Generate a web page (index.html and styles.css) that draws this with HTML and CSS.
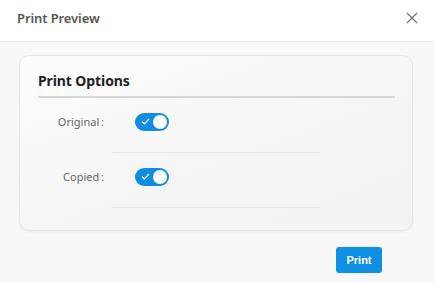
FILE: index.html
```html
<!DOCTYPE html>
<html>
<head>
<meta charset="utf-8">
<link rel="stylesheet" href="styles.css">
</head>
<body>
<div class="dialog">
  <header class="head">
    <h1 class="head-title">Print Preview</h1>
    <button class="close" aria-label="Close">
      <svg width="12" height="12" viewBox="0 0 12 12"><path d="M1 1L11 11M11 1L1 11" stroke="#707070" stroke-width="1.2" fill="none"/></svg>
    </button>
  </header>
  <main class="body">
    <section class="card">
      <h2 class="card-title">Print Options</h2>
      <div class="row">
        <label class="label">Original&thinsp;:</label>
        <div class="field">
          <span class="toggle"><svg class="check" width="9" height="7" viewBox="0 0 9 7"><path d="M1 3.6L3.3 5.8L8 1" stroke="#fff" stroke-width="1.2" fill="none"/></svg><span class="knob"></span></span>
        </div>
      </div>
      <div class="row">
        <label class="label">Copied&thinsp;:</label>
        <div class="field">
          <span class="toggle"><svg class="check" width="9" height="7" viewBox="0 0 9 7"><path d="M1 3.6L3.3 5.8L8 1" stroke="#fff" stroke-width="1.2" fill="none"/></svg><span class="knob"></span></span>
        </div>
      </div>
    </section>
    <div class="actions">
      <button class="print">Print</button>
    </div>
  </main>
</div>
</body>
</html>
```

FILE: styles.css
```css
html, body {
  margin: 0;
  padding: 0;
  background: #f8f8f8;
  font-family: "Noto Sans", "Open Sans", sans-serif;
}
.dialog {
  width: 434px;
  height: 283px;
  overflow: hidden;
}
.head {
  height: 41px;
  background: #fff;
  border-bottom: 1px solid #efefef;
  display: flex;
  align-items: center;
  justify-content: space-between;
  padding: 0 16px 0 17px;
  box-sizing: content-box;
}
.head-title {
  margin: 0;
  font-size: 13px;
  font-weight: 600;
  color: #555;
  letter-spacing: -0.1px;
  position: relative;
  top: -3px;
}
.close {
  border: 0;
  background: none;
  padding: 0;
  width: 12px;
  height: 12px;
  display: flex;
  position: relative;
  top: -3px;
}
.body {
  padding: 13px 21px 0 19px;
}
.card {
  border: 1px solid #e6e6e6;
  border-radius: 10px;
  background: linear-gradient(160deg, #fdfdfd 0%, #f4f4f4 60%, #f3f3f3 100%);
  box-shadow: 0 1px 3px rgba(0,0,0,0.06);
  padding: 15px 17px 22px 18px;
}
.card-title {
  margin: 0;
  font-size: 14px;
  font-weight: 700;
  color: #222;
  line-height: 20px;
  padding-bottom: 5px;
  border-bottom: 2px solid #d6d6d6;
  letter-spacing: -0.1px;
}
.row {
  display: flex;
}
.label {
  width: 66px;
  padding-right: 8px;
  text-align: right;
  font-size: 11px;
  color: #666;
  display: flex;
  align-items: center;
  justify-content: flex-end;
  padding-bottom: 8px;
}
.field {
  width: 208px;
  height: 55px;
  padding-left: 23px;
  border-bottom: 1px solid #e4e4e4;
  display: flex;
  align-items: center;
  padding-bottom: 6px;
  box-sizing: border-box;
}
.toggle {
  width: 34px;
  height: 18px;
  border-radius: 9px;
  background: #0f8de0;
  position: relative;
  display: block;
}
.check {
  position: absolute;
  left: 6px;
  top: 5px;
}
.knob {
  position: absolute;
  right: 2px;
  top: 2px;
  width: 14px;
  height: 14px;
  border-radius: 50%;
  background: #fff;
}
.actions {
  display: flex;
  justify-content: flex-end;
  padding-top: 16px;
  padding-right: 31px;
}
.print {
  width: 46px;
  height: 26px;
  border: 0;
  border-radius: 3px;
  background: #0f90e2;
  color: #fff;
  font-family: "Liberation Sans", Arial, sans-serif;
  font-size: 11px;
  font-weight: 700;
  padding: 0;
}
```
